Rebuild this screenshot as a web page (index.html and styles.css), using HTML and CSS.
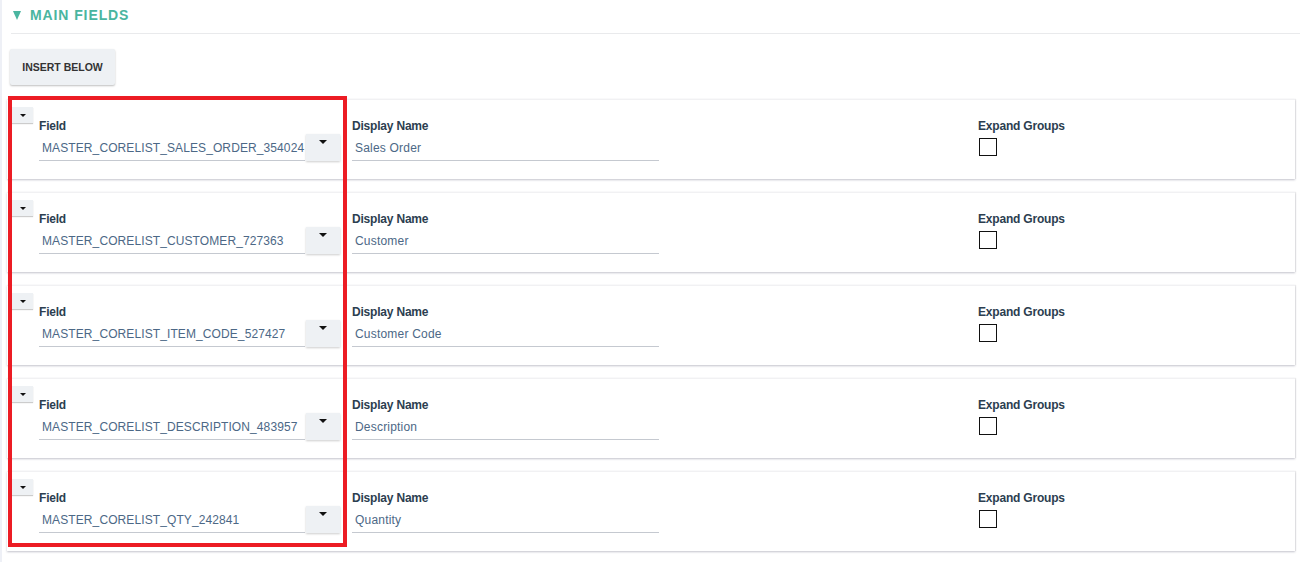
FILE: index.html
```html
<!DOCTYPE html>
<html>
<head>
<meta charset="utf-8">
<link rel="stylesheet" href="styles.css">
</head>
<body>
<div class="page">
  <div class="section-head"><span class="caret"></span><span>MAIN FIELDS</span></div>
  <div class="rule"></div>
  <button class="insert-btn">INSERT BELOW</button>
  <div class="cards">
    <div class="card">
      <button class="mini-btn"><span class="tri-s"></span></button>
      <div class="col col-field">
        <div class="label">Field</div>
        <div class="field-row">
          <div class="input field-input">MASTER_CORELIST_SALES_ORDER_354024</div>
          <button class="drop-btn"><span class="tri"></span></button>
        </div>
      </div>
      <div class="col col-display">
        <div class="label">Display Name</div>
        <div class="input display-input">Sales Order</div>
      </div>
      <div class="col col-expand">
        <div class="label">Expand Groups</div>
        <div class="checkbox"></div>
      </div>
    </div>
    <div class="card">
      <button class="mini-btn"><span class="tri-s"></span></button>
      <div class="col col-field">
        <div class="label">Field</div>
        <div class="field-row">
          <div class="input field-input">MASTER_CORELIST_CUSTOMER_727363</div>
          <button class="drop-btn"><span class="tri"></span></button>
        </div>
      </div>
      <div class="col col-display">
        <div class="label">Display Name</div>
        <div class="input display-input">Customer</div>
      </div>
      <div class="col col-expand">
        <div class="label">Expand Groups</div>
        <div class="checkbox"></div>
      </div>
    </div>
    <div class="card">
      <button class="mini-btn"><span class="tri-s"></span></button>
      <div class="col col-field">
        <div class="label">Field</div>
        <div class="field-row">
          <div class="input field-input">MASTER_CORELIST_ITEM_CODE_527427</div>
          <button class="drop-btn"><span class="tri"></span></button>
        </div>
      </div>
      <div class="col col-display">
        <div class="label">Display Name</div>
        <div class="input display-input">Customer Code</div>
      </div>
      <div class="col col-expand">
        <div class="label">Expand Groups</div>
        <div class="checkbox"></div>
      </div>
    </div>
    <div class="card">
      <button class="mini-btn"><span class="tri-s"></span></button>
      <div class="col col-field">
        <div class="label">Field</div>
        <div class="field-row">
          <div class="input field-input">MASTER_CORELIST_DESCRIPTION_483957</div>
          <button class="drop-btn"><span class="tri"></span></button>
        </div>
      </div>
      <div class="col col-display">
        <div class="label">Display Name</div>
        <div class="input display-input">Description</div>
      </div>
      <div class="col col-expand">
        <div class="label">Expand Groups</div>
        <div class="checkbox"></div>
      </div>
    </div>
    <div class="card">
      <button class="mini-btn"><span class="tri-s"></span></button>
      <div class="col col-field">
        <div class="label">Field</div>
        <div class="field-row">
          <div class="input field-input">MASTER_CORELIST_QTY_242841</div>
          <button class="drop-btn"><span class="tri"></span></button>
        </div>
      </div>
      <div class="col col-display">
        <div class="label">Display Name</div>
        <div class="input display-input">Quantity</div>
      </div>
      <div class="col col-expand">
        <div class="label">Expand Groups</div>
        <div class="checkbox"></div>
      </div>
    </div>
  </div>
  <div class="highlight"></div>
</div>
</body>
</html>
```

FILE: styles.css
```css
* { box-sizing: border-box; }
html, body { margin: 0; padding: 0; background: #fff; }
body {
  font-family: "Liberation Sans", Arial, sans-serif;
  color: #2c3e50;
  overflow: hidden;
}
.page {
  position: relative;
  height: 562px;
  padding: 0 10px 0 5px;
  border-left: 2px solid #eef0f6;
}
.section-head {
  display: flex;
  align-items: center;
  gap: 9px;
  padding: 0 0 4px 6px;
  height: 33px;
  color: #4ab5a0;
  font-weight: bold;
  font-size: 14px;
  letter-spacing: 0.9px;
}
.caret {
  width: 0; height: 0;
  border-left: 4px solid transparent;
  border-right: 4px solid transparent;
  border-top: 9px solid #4ab5a0;
  margin-top: 1px;
}
.rule {
  margin: 0 -5px 15px 4px;
  height: 1px;
  background: #e9eaec;
}
.insert-btn {
  display: block;
  margin-left: 3px;
  width: 105px;
  height: 36px;
  border: none;
  border-radius: 2px;
  background: #eef1f4;
  box-shadow: 0 1px 2px rgba(0,0,0,0.25);
  font-family: "Liberation Sans", Arial, sans-serif;
  font-weight: bold;
  font-size: 10.5px;
  color: #333;
  padding: 0;
}
.cards {
  margin-top: 14px;
  display: flex;
  flex-direction: column;
  gap: 13px;
}
.card {
  display: flex;
  align-items: flex-start;
  height: 80px;
  width: 1288px;
  padding: 7px 5px 0 5px;
  background: #fff;
  border-top: 1px solid #f1f1f3;
  box-shadow: 0 1px 2px rgba(60,60,90,0.3), 1px 0 1px rgba(0,0,0,0.06);
}
.mini-btn {
  width: 21px;
  height: 16px;
  padding: 0;
  border: none;
  background: #eef1f4;
  box-shadow: 0 1px 1px rgba(0,0,0,0.2);
  display: flex;
  align-items: center;
  justify-content: center;
  flex: none;
}
.tri-s {
  width: 0; height: 0;
  border-left: 3px solid transparent;
  border-right: 3px solid transparent;
  border-top: 3px solid #111;
}
.tri {
  width: 0; height: 0;
  border-left: 4px solid transparent;
  border-right: 4px solid transparent;
  border-top: 4px solid #111;
}
.col { margin-top: 12px; }
.label {
  font-weight: bold;
  font-size: 12px;
  line-height: 14px;
  color: #2c3e50;
  margin-bottom: 1px;
  letter-spacing: -0.2px;
}
.col-field { margin-left: 6px; width: 301px; }
.field-row { display: flex; align-items: flex-start; }
.input {
  font-size: 12px;
  color: #4c6886;
  letter-spacing: 0.1px;
  height: 27px;
  padding: 7px 0 0 3px;
  border-bottom: 1px solid #c5c9d0;
  white-space: nowrap;
}
.field-input { width: 266px; overflow: hidden; }
.drop-btn {
  width: 34px;
  height: 27px;
  margin-left: 1px;
  border: none;
  padding: 6px 0 0 0;
  background: #eef1f4;
  box-shadow: 0 1px 2px rgba(0,0,0,0.2);
  display: flex;
  justify-content: center;
  align-items: flex-start;
}
.col-display { margin-left: 12px; width: 307px; }
.display-input { padding-left: 3px; letter-spacing: 0.2px; }
.col-expand { margin-left: 319px; }
.checkbox {
  margin-top: 5px;
  margin-left: 1px;
  width: 18px;
  height: 18px;
  border: 1px solid #111;
}
.highlight {
  position: absolute;
  left: 6px;
  top: 96px;
  width: 339px;
  height: 451px;
  border: 4px solid #ec1c24;
  pointer-events: none;
}
```
